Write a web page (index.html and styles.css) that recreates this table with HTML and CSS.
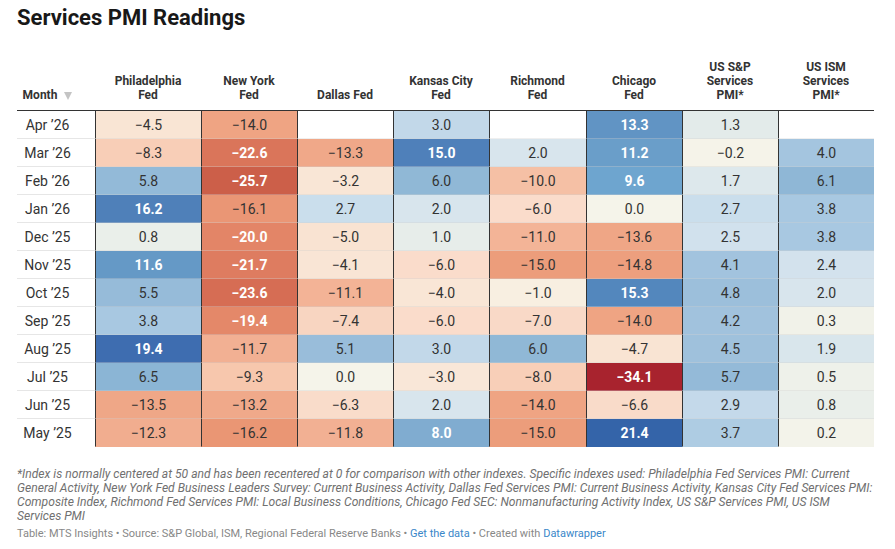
FILE: index.html
```html
<!DOCTYPE html>
<html lang="en">
<head>
<meta charset="utf-8">
<title>Services PMI Readings</title>
<link rel="stylesheet" href="styles.css">
</head>
<body>
<div class="chart">
  <h1 class="title">Services PMI Readings</h1>
  <table class="pmi">
    <colgroup>
      <col class="c-month"><col class="c-phil"><col class="c-std"><col class="c-std"><col class="c-std"><col class="c-rich"><col class="c-std"><col class="c-std"><col class="c-std">
    </colgroup>
    <thead>
      <tr>
        <th class="h-month">Month <span class="sort"></span></th>
        <th>Philadelphia<br>Fed</th>
        <th>New York<br>Fed</th>
        <th>Dallas Fed</th>
        <th>Kansas City<br>Fed</th>
        <th>Richmond<br>Fed</th>
        <th>Chicago<br>Fed</th>
        <th>US S&amp;P<br>Services<br>PMI*</th>
        <th>US ISM<br>Services<br>PMI*</th>
      </tr>
    </thead>
    <tbody>
      <tr>
        <td class="month">Apr ’26</td>
        <td style="background:#f9e5d4">−4.5</td>
        <td style="background:#efa483">−14.0</td>
        <td class="empty"></td>
        <td style="background:#c2d8e9">3.0</td>
        <td class="empty"></td>
        <td class="dark" style="background:#6194c4">13.3</td>
        <td style="background:#e3ebea">1.3</td>
        <td class="empty"></td>
      </tr>
      <tr>
        <td class="month">Mar ’26</td>
        <td style="background:#f8ceb7">−8.3</td>
        <td class="dark" style="background:#da755a">−22.6</td>
        <td style="background:#f0a889">−13.3</td>
        <td class="dark" style="background:#4f80ba">15.0</td>
        <td style="background:#d8e5ed">2.0</td>
        <td class="dark" style="background:#6a9ec9">11.2</td>
        <td style="background:#f5f3e9">−0.2</td>
        <td style="background:#a4c5df">4.0</td>
      </tr>
      <tr>
        <td class="month">Feb ’26</td>
        <td style="background:#93bad8">5.8</td>
        <td class="dark" style="background:#cc5f49">−25.7</td>
        <td style="background:#f9e6d6">−3.2</td>
        <td style="background:#90b8d6">6.0</td>
        <td style="background:#f5c0a5">−10.0</td>
        <td class="dark" style="background:#6ea5cf">9.6</td>
        <td style="background:#dde8ec">1.7</td>
        <td style="background:#8fb7d6">6.1</td>
      </tr>
      <tr>
        <td class="month">Jan ’26</td>
        <td class="dark" style="background:#4f80b9">16.2</td>
        <td style="background:#ea9675">−16.1</td>
        <td style="background:#cadeec">2.7</td>
        <td style="background:#d8e5ed">2.0</td>
        <td style="background:#fadccb">−6.0</td>
        <td style="background:#f5f4ea">0.0</td>
        <td style="background:#cadeec">2.7</td>
        <td style="background:#a8c8e1">3.8</td>
      </tr>
      <tr>
        <td class="month">Dec ’25</td>
        <td style="background:#eaefea">0.8</td>
        <td class="dark" style="background:#e38567">−20.0</td>
        <td style="background:#f9e3d2">−5.0</td>
        <td style="background:#e7edea">1.0</td>
        <td style="background:#f3b497">−11.0</td>
        <td style="background:#efa686">−13.6</td>
        <td style="background:#d1e1ed">2.5</td>
        <td style="background:#a8c8e1">3.8</td>
      </tr>
      <tr>
        <td class="month">Nov ’25</td>
        <td class="dark" style="background:#6599c6">11.6</td>
        <td class="dark" style="background:#de7c60">−21.7</td>
        <td style="background:#f9e5d5">−4.1</td>
        <td style="background:#fadccb">−6.0</td>
        <td style="background:#ec9d7b">−15.0</td>
        <td style="background:#ed9f7e">−14.8</td>
        <td style="background:#a2c3de">4.1</td>
        <td style="background:#d3e2ed">2.4</td>
      </tr>
      <tr>
        <td class="month">Oct ’25</td>
        <td style="background:#96bbd9">5.5</td>
        <td class="dark" style="background:#d66d54">−23.6</td>
        <td style="background:#f3b396">−11.1</td>
        <td style="background:#f9e6d6">−4.0</td>
        <td style="background:#f8efe1">−1.0</td>
        <td class="dark" style="background:#5387bd">15.3</td>
        <td style="background:#9cbfdb">4.8</td>
        <td style="background:#d8e5ed">2.0</td>
      </tr>
      <tr>
        <td class="month">Sep ’25</td>
        <td style="background:#a8c8e1">3.8</td>
        <td class="dark" style="background:#e48869">−19.4</td>
        <td style="background:#f8d5c1">−7.4</td>
        <td style="background:#fadccb">−6.0</td>
        <td style="background:#f9d9c7">−7.0</td>
        <td style="background:#efa483">−14.0</td>
        <td style="background:#a1c2dd">4.2</td>
        <td style="background:#f1f2e9">0.3</td>
      </tr>
      <tr>
        <td class="month">Aug ’25</td>
        <td class="dark" style="background:#3e6db0">19.4</td>
        <td style="background:#f2b093">−11.7</td>
        <td style="background:#99bdda">5.1</td>
        <td style="background:#c2d8e9">3.0</td>
        <td style="background:#90b8d6">6.0</td>
        <td style="background:#f9e4d3">−4.7</td>
        <td style="background:#9fc1dc">4.5</td>
        <td style="background:#d9e6ec">1.9</td>
      </tr>
      <tr>
        <td class="month">Jul ’25</td>
        <td style="background:#8bb5d5">6.5</td>
        <td style="background:#f7c7ad">−9.3</td>
        <td style="background:#f5f4ea">0.0</td>
        <td style="background:#f9e7d8">−3.0</td>
        <td style="background:#f8cfb8">−8.0</td>
        <td class="dark" style="background:#a8232e">−34.1</td>
        <td style="background:#94bad8">5.7</td>
        <td style="background:#eef1ea">0.5</td>
      </tr>
      <tr>
        <td class="month">Jun ’25</td>
        <td style="background:#efa787">−13.5</td>
        <td style="background:#f0a98a">−13.2</td>
        <td style="background:#f9dcca">−6.3</td>
        <td style="background:#d8e5ed">2.0</td>
        <td style="background:#efa483">−14.0</td>
        <td style="background:#f9dbc9">−6.6</td>
        <td style="background:#c4d9ea">2.9</td>
        <td style="background:#eaefea">0.8</td>
      </tr>
      <tr>
        <td class="month">May ’25</td>
        <td style="background:#f1ad8f">−12.3</td>
        <td style="background:#ea9674">−16.2</td>
        <td style="background:#f2b093">−11.8</td>
        <td class="dark" style="background:#80acd0">8.0</td>
        <td style="background:#ec9d7b">−15.0</td>
        <td class="dark" style="background:#3464a9">21.4</td>
        <td style="background:#aecce3">3.7</td>
        <td style="background:#f3f3ea">0.2</td>
      </tr>
    </tbody>
  </table>
  <p class="notes">*Index is normally centered at 50 and has been recentered at 0 for comparison with other indexes. Specific indexes used: Philadelphia Fed Services PMI: Current<br>General Activity, New York Fed Business Leaders Survey: Current Business Activity, Dallas Fed Services PMI: Current Business Activity, Kansas City Fed Services PMI:<br>Composite Index, Richmond Fed Services PMI: Local Business Conditions, Chicago Fed SEC: Nonmanufacturing Activity Index, US S&amp;P Services PMI, US ISM<br>Services PMI</p>
  <p class="footer">Table: MTS Insights • Source: S&amp;P Global, ISM, Regional Federal Reserve Banks • <a class="link" href="#">Get the data</a> • Created with <a class="link" href="#">Datawrapper</a></p>
</div>
</body>
</html>
```

FILE: styles.css
```css
html, body {
  margin: 0;
  padding: 0;
  background: #ffffff;
}

body {
  font-family: Roboto, "Liberation Sans", Arial, sans-serif;
  color: #333333;
}

.chart {
  width: 857px;
  padding: 6px 21px 0 17px;
}

.title {
  margin: 0;
  font-size: 22px;
  line-height: 24px;
  font-weight: 700;
  color: #181818;
}

.pmi {
  margin-top: 30px;
  width: 857px;
  table-layout: fixed;
  border-collapse: separate;
  border-spacing: 0;
}

.c-month { width: 78px; }
.c-phil { width: 106px; }
.c-std { width: 96px; }
.c-rich { width: 97px; }

.pmi th {
  box-sizing: border-box;
  font-size: 12px;
  line-height: 14px;
  font-weight: 700;
  color: #333333;
  text-align: center;
  vertical-align: bottom;
  padding: 0 4px 8px;
  border-bottom: 1px solid #333333;
}

.pmi th.h-month {
  padding: 0 17px 8px 0;
}

.sort {
  display: inline-block;
  width: 0;
  height: 0;
  margin-left: 4px;
  border-left: 4px solid transparent;
  border-right: 4px solid transparent;
  border-top: 8px solid #c4c4c4;
  vertical-align: -1px;
}

.pmi td {
  box-sizing: border-box;
  height: 28px;
  padding: 0;
  font-size: 14px;
  line-height: 16px;
  text-align: center;
  vertical-align: middle;
  color: #333333;
  border-left: 1px solid #333333;
  border-bottom: 1px solid rgba(210, 210, 210, 0.35);
}

.pmi td.month {
  border-left: none;
  border-bottom: 1px solid #e6e6e6;
  padding-right: 17px;
}

.pmi tbody tr:last-child td {
  border-bottom-color: transparent;
}

.pmi td.empty {
  background: #ffffff;
}

.pmi td.dark {
  color: #ffffff;
  font-weight: 700;
}

.notes {
  margin: 20px 0 0;
  font-size: 12.1px;
  line-height: 14px;
  font-style: italic;
  color: #707070;
}

.footer {
  margin: 4px 0 0;
  font-size: 11px;
  line-height: 14px;
  color: #888888;
}

.link {
  color: #3a87c9;
  text-decoration: none;
}
```
